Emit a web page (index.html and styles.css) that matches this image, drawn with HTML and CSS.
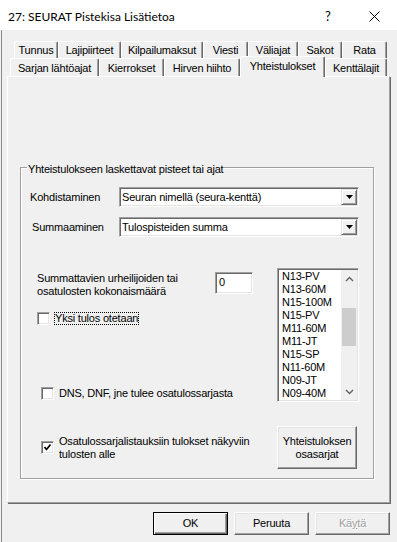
FILE: index.html
```html
<!DOCTYPE html>
<html lang="fi">
<head>
<meta charset="utf-8">
<title>27: SEURAT Pistekisa Lisätietoa</title>
<link rel="stylesheet" href="styles.css">
</head>
<body>
<div class="window">
  <div class="titlebar">
    <span class="title">27: SEURAT Pistekisa Lisätietoa</span>
    <span class="cap-btn help">?</span>
    <span class="cap-btn close"><svg width="11" height="11" viewBox="0 0 11 11"><path d="M0.5 0.5 L10.5 10.5 M10.5 0.5 L0.5 10.5" stroke="#000" stroke-width="1" fill="none"/></svg></span>
  </div>
  <div class="client">
    <div class="tabs">
      <div class="tabrow row1">
        <div class="tab">Tunnus</div>
        <div class="tab">Lajipiirteet</div>
        <div class="tab">Kilpailumaksut</div>
        <div class="tab">Viesti</div>
        <div class="tab">Väliajat</div>
        <div class="tab">Sakot</div>
        <div class="tab">Rata</div>
      </div>
      <div class="tabrow row2">
        <div class="tab">Sarjan lähtöajat</div>
        <div class="tab">Kierrokset</div>
        <div class="tab">Hirven hiihto</div>
        <div class="tab active">Yhteistulokset</div>
        <div class="tab">Kenttälajit</div>
      </div>
    </div>
    <div class="panel">
      <div class="group">
        <div class="group-caption">Yhteistulokseen laskettavat pisteet tai ajat</div>
        <div class="field r1">
          <span class="field-label">Kohdistaminen</span>
          <div class="combo"><span class="combo-text">Seuran nimellä (seura-kenttä)</span><span class="combo-btn"><svg width="7" height="4" viewBox="0 0 7 4"><path d="M0 0 H7 L3.5 4 Z" fill="#000"/></svg></span></div>
        </div>
        <div class="field r2">
          <span class="field-label">Summaaminen</span>
          <div class="combo"><span class="combo-text">Tulospisteiden summa</span><span class="combo-btn"><svg width="7" height="4" viewBox="0 0 7 4"><path d="M0 0 H7 L3.5 4 Z" fill="#000"/></svg></span></div>
        </div>
        <div class="mid">
          <div class="mid-left">
            <div class="count-row">
              <span class="count-label">Summattavien urheilijoiden tai<br>osatulosten kokonaismäärä</span>
              <div class="edit">0</div>
            </div>
            <div class="check c-yksi"><span class="box"></span><span class="focus">Yksi tulos otetaan</span></div>
            <div class="check c-dns"><span class="box"></span><span class="check-text">DNS, DNF, jne tulee osatulossarjasta</span></div>
          </div>
          <div class="listbox">
            <div class="items">
              <div class="item">N13-PV</div>
              <div class="item">N13-60M</div>
              <div class="item">N15-100M</div>
              <div class="item">N15-PV</div>
              <div class="item">M11-60M</div>
              <div class="item">M11-JT</div>
              <div class="item">N15-SP</div>
              <div class="item">N11-60M</div>
              <div class="item">N09-JT</div>
              <div class="item">N09-40M</div>
              <div class="item">N11-PV</div>
            </div>
            <div class="vscroll">
              <span class="arrow"><svg width="9" height="6" viewBox="0 0 9 6"><path d="M1 5 L4.5 1.5 L8 5" stroke="#606060" stroke-width="1.4" fill="none"/></svg></span>
              <span class="track"><span class="thumb"></span></span>
              <span class="arrow"><svg width="9" height="6" viewBox="0 0 9 6"><path d="M1 1 L4.5 4.5 L8 1" stroke="#606060" stroke-width="1.4" fill="none"/></svg></span>
            </div>
          </div>
        </div>
        <div class="bottom">
          <div class="check c-osa"><span class="box checked"><svg width="9" height="9" viewBox="0 0 9 9"><path d="M1.5 4 L3.5 6.5 L7.5 1.5" stroke="#000" stroke-width="1.7" fill="none"/></svg></span><span class="check-text wrap">Osatulossarjalistauksiin tulokset näkyviin tulosten alle</span></div>
          <div class="btn btn-osa">Yhteistuloksen<br>osasarjat</div>
        </div>
      </div>
    </div>
    <div class="buttons">
      <div class="btn btn-dlg default">OK</div>
      <div class="btn btn-dlg">Peruuta</div>
      <div class="btn btn-dlg disabled">Kä<u>y</u>tä</div>
    </div>
  </div>
</div>
</body>
</html>
```
FILE: styles.css
```css
* { box-sizing: border-box; }
html, body { margin: 0; padding: 0; }
body {
  width: 397px;
  height: 542px;
  overflow: hidden;
  background: #f0f0f0;
  font-family: "Liberation Sans", Arial, sans-serif;
  font-size: 11px;
  letter-spacing: -0.2px;
  color: #000;
}
.window {
  width: 397px;
  height: 542px;
  display: flex;
  flex-direction: column;
  background: #f0f0f0;
}
.titlebar {
  flex: none;
  height: 30px;
  background: #fff;
  display: flex;
  align-items: center;
  padding-left: 8px;
  padding-top: 2px;
  font-family: Lato, "Noto Sans", sans-serif;
  font-size: 12px;
  letter-spacing: 0;
}
.title { flex: 1; }
.cap-btn {
  width: 46px;
  display: flex;
  justify-content: center;
  align-items: center;
}
.help { font-size: 13px; }
.client {
  flex: 1;
  box-shadow: inset 1px 0 0 #f0f0f0, inset 2px 0 0 #8c8c8c;
}
.tabs { margin-top: 11px; }
.tabrow { display: flex; }
.row1 { margin-left: 14px; height: 17px; }
.row2 { margin-left: 10px; height: 18px; }
.tab {
  display: flex;
  align-items: center;
  justify-content: center;
  white-space: nowrap;
  background: #f0f0f0;
  border-left: 1px solid #fff;
  border-top: 1px solid #fff;
  border-right: 1px solid #696969;
  box-shadow: inset -1px 0 0 #a0a0a0;
  border-radius: 2px 2px 0 0;
}
.row1 .tab:nth-child(1) { width: 44px; }
.row1 .tab:nth-child(2) { width: 63px; }
.row1 .tab:nth-child(3) { width: 82px; }
.row1 .tab:nth-child(4) { width: 45px; }
.row1 .tab:nth-child(5) { width: 50px; }
.row1 .tab:nth-child(6) { width: 44px; }
.row1 .tab:nth-child(7) { width: 45px; }
.row2 .tab:nth-child(1) { width: 89px; }
.row2 .tab:nth-child(2) { width: 65px; }
.row2 .tab:nth-child(3) { width: 76px; }
.row2 .tab:nth-child(4) { width: 85px; }
.row2 .tab:nth-child(5) { width: 62px; }
.tab.active {
  margin-top: -2px;
  margin-bottom: -1px;
  padding-bottom: 2px;
  position: relative;
  z-index: 1;
}
.panel {
  margin-left: 7px;
  width: 383px;
  height: 427px;
  border-left: 1px solid #fff;
  border-top: 1px solid #fff;
  border-right: 1px solid #a0a0a0;
  border-bottom: 1px solid #a0a0a0;
  box-shadow: 1px 1px 0 #696969;
  padding-top: 90px;
  padding-left: 12px;
}
.group {
  width: 354px;
  height: 312px;
  border: 1px solid #a0a0a0;
  box-shadow: 1px 1px 0 #fff, inset 1px 1px 0 #fff;
}
.group-caption {
  width: max-content;
  margin: -5px 0 0 6px;
  padding: 0 1px;
  line-height: 13px;
  background: #f0f0f0;
}
.field {
  display: flex;
  align-items: center;
  height: 20px;
}
.r1 { margin-top: 11px; }
.r2 { margin-top: 10px; }
.field-label { width: 98px; padding-left: 9px; }
.r2 .field-label { padding-left: 11px; }
.combo {
  width: 240px;
  height: 20px;
  display: flex;
  align-items: center;
  background: #fff;
  border: 1px solid;
  border-color: #a0a0a0 #fff #fff #a0a0a0;
  box-shadow: inset 1px 1px 0 #696969, inset -1px -1px 0 #e3e3e3;
  padding: 1px 1px 1px 2px;
}
.combo-text { flex: 1; white-space: nowrap; }
.combo-btn {
  width: 16px;
  height: 16px;
  display: flex;
  align-items: center;
  justify-content: center;
  background: #f0f0f0;
  border: 1px solid;
  border-color: #e3e3e3 #696969 #696969 #e3e3e3;
  box-shadow: inset 1px 1px 0 #fff, inset -1px -1px 0 #a0a0a0;
}
.mid {
  display: flex;
  margin-top: 31px;
  height: 134px;
}
.mid-left { width: 256px; }
.count-row {
  display: flex;
  align-items: flex-start;
  margin-top: 4px;
  height: 26px;
}
.count-label {
  width: 194px;
  padding-left: 16px;
  line-height: 13px;
}
.edit {
  width: 38px;
  height: 22px;
  background: #fff;
  border: 1px solid;
  border-color: #a0a0a0 #fff #fff #a0a0a0;
  box-shadow: inset 1px 1px 0 #696969, inset -1px -1px 0 #e3e3e3;
  padding: 3px 0 0 3px;
  line-height: 13px;
}
.check {
  display: flex;
  align-items: center;
  line-height: 13px;
}
.box {
  flex: none;
  width: 13px;
  height: 13px;
  background: #fff;
  border: 1px solid;
  border-color: #a0a0a0 #fff #fff #a0a0a0;
  box-shadow: inset 1px 1px 0 #696969, inset -1px -1px 0 #e3e3e3;
  display: flex;
  align-items: center;
  justify-content: center;
}
.c-yksi { margin-top: 14px; padding-left: 16px; height: 13px; }
.c-yksi .box { margin-right: 4px; }
.focus {
  outline: 1px dotted #000;
  outline-offset: -1px;
  padding: 0 1px;
  height: 13px;
  line-height: 13px;
}
.c-dns { margin-top: 62px; padding-left: 20px; height: 13px; }
.c-dns .box, .c-osa .box { margin-right: 5px; }
.listbox {
  width: 82px;
  height: 134px;
  display: flex;
  background: #fff;
  border: 1px solid;
  border-color: #a0a0a0 #fff #fff #a0a0a0;
  box-shadow: inset 1px 1px 0 #696969, inset -1px -1px 0 #e3e3e3;
  padding: 1px 1px 1px 1px;
  overflow: hidden;
}
.items {
  flex: 1;
  overflow: hidden;
  padding-left: 3px;
}
.item { height: 13px; line-height: 13px; white-space: nowrap; }
.vscroll {
  width: 16px;
  display: flex;
  flex-direction: column;
  background: #f0f0f0;
}
.arrow {
  height: 17px;
  display: flex;
  align-items: center;
  justify-content: center;
  flex: none;
}
.track {
  flex: 1;
  display: flex;
  flex-direction: column;
  padding: 21px 1px 0 1px;
}
.thumb {
  height: 38px;
  background: #cdcdcd;
}
.bottom {
  display: flex;
  align-items: center;
  margin-top: 24px;
  height: 43px;
}
.c-osa { width: 256px; padding-left: 20px; }
.wrap { width: 200px; }
.btn {
  display: flex;
  align-items: center;
  justify-content: center;
  text-align: center;
  background: #f0f0f0;
  border: 1px solid;
  border-color: #fff #696969 #696969 #fff;
  box-shadow: inset -1px -1px 0 #a0a0a0, inset 1px 1px 0 #e3e3e3;
  line-height: 13px;
}
.btn-osa { width: 80px; height: 43px; }
.buttons {
  display: flex;
  justify-content: flex-end;
  gap: 6px;
  margin-top: 9px;
  padding-right: 7px;
}
.btn-dlg { width: 75px; height: 23px; }
.btn.default {
  border: 1px solid #000;
  box-shadow: inset 1px 1px 0 #fff, inset -1px -1px 0 #696969, inset -2px -2px 0 #a0a0a0;
}
.btn.disabled {
  color: #a0a0a0;
  text-shadow: 1px 1px 0 #fff;
}
.btn.disabled u { text-decoration-color: #a0a0a0; }
```
